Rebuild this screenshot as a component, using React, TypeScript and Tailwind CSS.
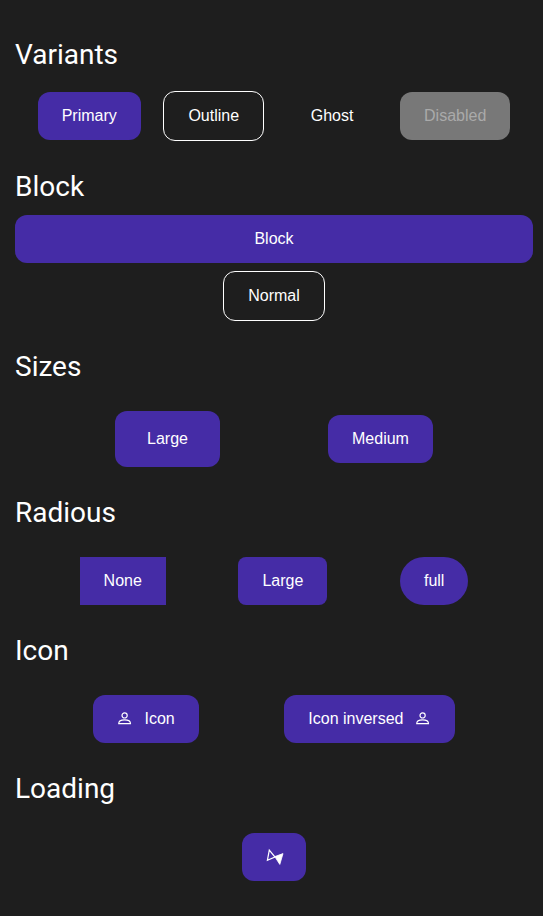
import type { ReactNode } from 'react';
import { clsx } from 'clsx';

type ButtonProps = {
  children: ReactNode;
  variant?: 'primary' | 'outline' | 'ghost' | 'disabled';
  size?: 'medium' | 'large';
  radius?: 'none' | 'large' | 'xl' | 'full';
  block?: boolean;
};

const variants = {
  primary: 'bg-[#452ca6] text-white',
  outline: 'border border-white text-white',
  ghost: 'text-white',
  disabled: 'bg-[#787878] text-[#aaaaaa]',
};

const radii = {
  none: 'rounded-none',
  large: 'rounded-lg',
  xl: 'rounded-xl',
  full: 'rounded-full',
};

function Button({ children, variant = 'primary', size = 'medium', radius = 'xl', block }: ButtonProps) {
  return (
    <button
      disabled={variant === 'disabled'}
      className={clsx(
        'flex items-center justify-center gap-3 text-base leading-4 font-["Liberation_Sans",Arial,sans-serif]',
        size === 'large' ? 'px-8 py-5' : 'px-6 py-4',
        variants[variant],
        radii[radius],
        block && 'w-full',
      )}
    >
      {children}
    </button>
  );
}

function Heading({ children }: { children: ReactNode }) {
  return <h2 className="text-[28px] leading-8 font-normal">{children}</h2>;
}

function PersonIcon() {
  return (
    <svg width="16" height="16" viewBox="0 0 16 16" fill="none" stroke="white" strokeWidth="1.2" aria-hidden="true">
      <circle cx="7.6" cy="4.4" r="2.6" />
      <path d="M1.7 12.7C1.7 10.2 4 8.9 7.6 8.9s5.9 1.3 5.9 3.8Z" strokeLinejoin="round" />
    </svg>
  );
}

function Loader() {
  return (
    <svg width="16" height="16" viewBox="0 0 16 16" className="overflow-visible" aria-label="Loading">
      <path d="M3.3 1.2 1.4 11.3 9 8Z" fill="none" stroke="white" strokeWidth="1.2" />
      <path d="M17 4.6 8.8 7.6 13.8 15.4Z" fill="white" stroke="white" strokeWidth="0.8" strokeLinejoin="round" />
    </svg>
  );
}

export default function App() {
  return (
    <main className='min-h-screen bg-[#1e1e1e] pt-[39px] pr-[10px] pl-[15px] text-white font-["Roboto",sans-serif]'>
      <Heading>Variants</Heading>
      <div className="mt-5 mb-[30px] flex items-center justify-evenly">
        <Button>Primary</Button>
        <Button variant="outline">Outline</Button>
        <Button variant="ghost">Ghost</Button>
        <Button variant="disabled">Disabled</Button>
      </div>

      <Heading>Block</Heading>
      <div className="mt-3 mb-[30px] flex flex-col items-center gap-2">
        <Button block>Block</Button>
        <Button variant="outline">Normal</Button>
      </div>

      <Heading>Sizes</Heading>
      <div className="mt-7 mb-[30px] flex items-center justify-evenly gap-2">
        <Button size="large">Large</Button>
        <Button>Medium</Button>
      </div>

      <Heading>Radious</Heading>
      <div className="mt-7 mb-[30px] flex items-center justify-evenly gap-2">
        <Button radius="none">None</Button>
        <Button radius="large">Large</Button>
        <Button radius="full">full</Button>
      </div>

      <Heading>Icon</Heading>
      <div className="mt-7 mb-[30px] flex items-center justify-evenly gap-2">
        <Button><PersonIcon />Icon</Button>
        <Button>Icon inversed<PersonIcon /></Button>
      </div>

      <Heading>Loading</Heading>
      <div className="mt-7 flex items-center justify-evenly gap-2">
        <Button><Loader /></Button>
      </div>
    </main>
  );
}
